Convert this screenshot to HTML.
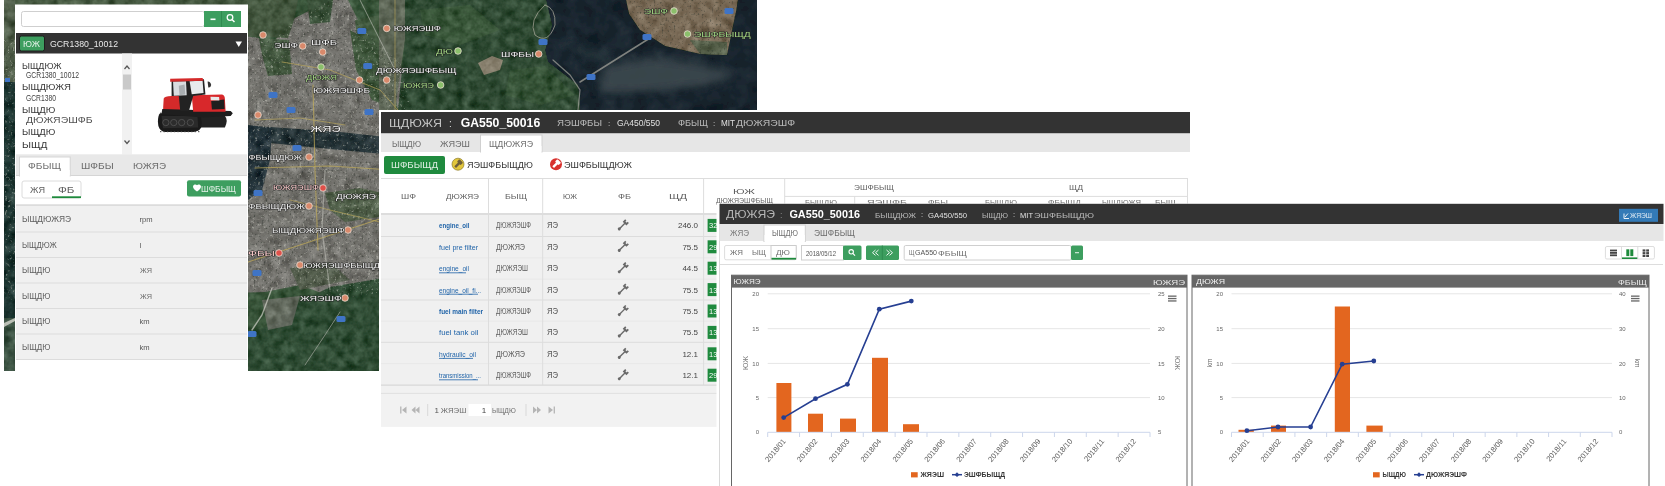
<!DOCTYPE html><html><head><meta charset="utf-8"><style>html,body{margin:0;padding:0;background:#fff;width:1665px;height:486px;overflow:hidden}svg{display:block;will-change:transform}</style></head><body>
<svg width="1665" height="486" viewBox="0 0 1665 486">
<rect x="0" y="0" width="1665" height="486" fill="#ffffff" />
<defs><filter id="tex" x="0" y="0" width="100%" height="100%" color-interpolation-filters="sRGB"><feTurbulence type="fractalNoise" baseFrequency="0.11" numOctaves="3" seed="7" result="n"/><feColorMatrix in="n" type="matrix" values="0.33 0.33 0.33 0 0  0.33 0.33 0.33 0 0  0.33 0.33 0.33 0 0  0 0 0 0 1" result="g"/><feComposite in="SourceGraphic" in2="g" operator="arithmetic" k1="0" k2="1" k3="0.55" k4="-0.275" result="b"/><feComposite in="b" in2="SourceGraphic" operator="in"/></filter><filter id="tex2" x="0" y="0" width="100%" height="100%" color-interpolation-filters="sRGB"><feTurbulence type="fractalNoise" baseFrequency="0.45" numOctaves="2" seed="11" result="n"/><feColorMatrix in="n" type="matrix" values="0.33 0.33 0.33 0 0  0.33 0.33 0.33 0 0  0.33 0.33 0.33 0 0  0 0 0 0 1" result="g"/><feComposite in="SourceGraphic" in2="g" operator="arithmetic" k1="0" k2="1" k3="0.7" k4="-0.35" result="b"/><feComposite in="b" in2="SourceGraphic" operator="in"/></filter><filter id="speck" x="0" y="0" width="100%" height="100%" color-interpolation-filters="sRGB"><feTurbulence type="fractalNoise" baseFrequency="0.38" numOctaves="2" seed="4"/><feColorMatrix type="matrix" values="0 0 0 0 0.82  0 0 0 0 0.82  0 0 0 0 0.78  5 0 0 0 -3.0"/></filter><filter id="speckd" x="0" y="0" width="100%" height="100%" color-interpolation-filters="sRGB"><feTurbulence type="fractalNoise" baseFrequency="0.5" numOctaves="1" seed="9"/><feColorMatrix type="matrix" values="0 0 0 0 0.15  0 0 0 0 0.18  0 0 0 0 0.15  5 0 0 0 -3.0"/></filter><filter id="texw" x="0" y="0" width="100%" height="100%" color-interpolation-filters="sRGB"><feTurbulence type="fractalNoise" baseFrequency="0.06" numOctaves="3" seed="2" result="n"/><feColorMatrix in="n" type="matrix" values="0.33 0.33 0.33 0 0  0.33 0.33 0.33 0 0  0.33 0.33 0.33 0 0  0 0 0 0 1" result="g"/><feComposite in="SourceGraphic" in2="g" operator="arithmetic" k1="0" k2="1" k3="0.22" k4="-0.11" result="b"/><feComposite in="b" in2="SourceGraphic" operator="in"/></filter><filter id="mblur" x="0" y="0" width="100%" height="100%"><feGaussianBlur stdDeviation="0.6"/></filter><filter id="soft" x="-20%" y="-20%" width="140%" height="140%"><feGaussianBlur stdDeviation="4"/></filter><clipPath id="urbclip"><path d="M4 40 L200 30 L275 40 L295 18 L330 0 L348 0 L362 28 L380 45 L400 62 L412 110 L395 160 L392 290 L340 300 L300 285 L265 292 L4 300 Z"/></clipPath><clipPath id="islclip"><path d="M626 0 L738 0 L736 12 L727 55 L700 54 L665 46 L640 30 L629 14 Z"/></clipPath><clipPath id="mapclip"><rect x="4" y="0" width="753" height="371"/></clipPath></defs>
<g filter="url(#mblur)">
<g clip-path="url(#mapclip)"><g filter="url(#tex)">
<rect x="4" y="0" width="753" height="371" fill="#385439" />
<path d="M4 40 L200 30 L275 40 L295 18 L330 0 L348 0 L362 28 L380 45 L400 62 L412 110 L395 160 L392 290 L340 300 L300 285 L265 292 L4 300 Z" fill="#74736e"/>
<path d="M4 0 L298 0 L294 20 L288 38 L240 36 L4 40 Z" fill="#44573f"/>
<path d="M350 30 L385 50 L398 110 L372 100 L356 70 Z" fill="#40583d"/>
<path d="M325 193 L360 188 L392 195 L392 215 L345 222 L330 210 Z" fill="#4f5e48"/>
<path d="M259 38 L289 40 L292 74 L268 76 L262 55 Z" fill="#43583f"/>
<path d="M307 0 L333 0 L330 22 L310 24 Z" fill="#3b523a"/>
<path d="M355 20 L380 15 L395 60 L380 90 L362 80 Z" fill="#3f573c"/>
<path d="M290 268 L330 262 L350 280 L300 290 Z" fill="#56604f"/>
<path d="M248 126 L270 127 L340 132 L395 138 L395 155 L340 150 L300 146 L270 143 Z" fill="#263438"/>
<path d="M248 125 L272 128 L270 160 L262 190 L248 200 Z" fill="#24333a"/>
<path d="M248 332 L270 326 L300 302 L330 287 L395 276 L395 371 L248 371 Z" fill="#304d35"/>
<path d="M262 300 L300 296 L292 325 L268 330 Z" fill="#6d6e66" opacity="0.8"/>
<path d="M4 0 L15 0 L15 82 L4 82 Z" fill="#52604c"/>
<path d="M4 82 L15 82 L15 318 L4 318 Z" fill="#1e3632"/>
<path d="M4 318 L15 318 L15 371 L4 371 Z" fill="#3b5242"/>
<path d="M379 0 L410 0 L405 40 L395 110 L379 110 Z" fill="#5d6656"/>
<path d="M405 0 L546 0 L552 25 L545 50 L548 62 L578 85 L580 110 L398 110 L405 40 Z" fill="#304b34"/>
<path d="M420 10 L470 5 L500 30 L460 45 L425 35 Z" fill="#3d5a3c" opacity="0.8"/>
<path d="M510 70 L545 66 L575 95 L540 105 L505 95 Z" fill="#3a563a" opacity="0.8"/>
<path d="M478 63 L492 56 L503 60 L500 70 L484 75 Z" fill="#8a8270"/>
</g></g>
<g clip-path="url(#mapclip)"><g filter="url(#texw)">
<path d="M546 0 L626 0 L629 14 L640 30 L665 46 L700 54 L727 55 L736 12 L738 0 L757 0 L757 110 L580 110 L578 85 L548 62 L545 50 L552 25 Z" fill="#19252e"/>
</g>
<path d="M605 66 L650 58 L700 64 L735 74 L705 86 L640 92 L598 92 Z" fill="#3c4a50" filter="url(#soft)" opacity="0.9"/>
<path d="M560 40 L600 50 L620 60 L590 62 Z" fill="#2c3a40" filter="url(#soft)" opacity="0.6"/>
</g>
<g clip-path="url(#mapclip)"><g filter="url(#tex)">
<path d="M626 0 L738 0 L736 12 L727 55 L700 54 L665 46 L640 30 L629 14 Z" fill="#7a6b57"/>
<path d="M690 40 L727 42 L727 55 L700 54 Z" fill="#56604a"/>
</g></g>
<g clip-path="url(#mapclip)"><g clip-path="url(#urbclip)"><rect x="4" y="0" width="420" height="310" filter="url(#speck)" opacity="0.45"/><rect x="4" y="0" width="420" height="310" filter="url(#speckd)" opacity="0.5"/></g></g>
<g clip-path="url(#islclip)"><rect x="620" y="0" width="125" height="60" filter="url(#speckd)" opacity="0.45"/></g>
<path d="M4 323 L15 318 L15 321 L4 327 Z" fill="#d8d8d0" opacity="0.8"/>
<rect x="5" y="78" width="5" height="4" fill="#3f74c6" />
<g clip-path="url(#mapclip)" fill="none" stroke-linecap="round">
<path d="M580 82 L615 60 L650 38" stroke="#9a9a92" stroke-width="1.5" opacity="0.8"/>
<path d="M553 60 L570 75 L580 90 L578 110" stroke="#a5a59c" stroke-width="1.2" opacity="0.7"/>
<path d="M545 5 Q528 20 535 35 Q548 45 555 25 Q556 8 545 5" stroke="#b0aea0" stroke-width="1" opacity="0.7"/>
<path d="M282 62 L330 70 L380 90 L398 110" stroke="#b8a45a" stroke-width="1" opacity="0.7"/>
<path d="M313 85 L315 170 L318 250" stroke="#c2ac5a" stroke-width="1.1" opacity="0.7"/>
<path d="M255 168 L330 166 L392 170" stroke="#c2ac5a" stroke-width="1.1" opacity="0.7"/>
<path d="M255 120 L300 118 L345 125" stroke="#c2ac5a" stroke-width="1" opacity="0.6"/>
<path d="M360 0 L380 40 L395 70" stroke="#c7c7c0" stroke-width="1" opacity="0.6"/>
<path d="M395 0 L395 110" stroke="#b8a45a" stroke-width="1" opacity="0.6"/>
<path d="M272 288 L262 315 L252 330" stroke="#d0d0c8" stroke-width="1.4" opacity="0.7"/>
<path d="M340 312 L325 335 L305 365" stroke="#b8b8b0" stroke-width="1" opacity="0.6"/>
<path d="M248 262 L300 245 L340 232 L392 215" stroke="#c2ac5a" stroke-width="1.1" opacity="0.7"/>
<path d="M290 200 L330 210 L392 225" stroke="#c2ac5a" stroke-width="1" opacity="0.6"/>
<path d="M325 170 L322 230 L330 290" stroke="#c9c9c2" stroke-width="1.2" opacity="0.5"/>
</g>
</g>
<circle cx="386.7" cy="28.4" r="3.3" fill="#d9896b" stroke="#e8ddd2" stroke-width="0.8"/>
<circle cx="302.7" cy="46" r="3.3" fill="#d9896b" stroke="#e8ddd2" stroke-width="0.8"/>
<circle cx="322.7" cy="52" r="3.3" fill="#d9896b" stroke="#e8ddd2" stroke-width="0.8"/>
<circle cx="458" cy="51" r="3.3" fill="#8bbf6b" stroke="#e8ddd2" stroke-width="0.8"/>
<circle cx="386.7" cy="80" r="3.3" fill="#d9896b" stroke="#e8ddd2" stroke-width="0.8"/>
<circle cx="440.6" cy="85" r="3.3" fill="#8bbf6b" stroke="#e8ddd2" stroke-width="0.8"/>
<circle cx="321" cy="67" r="3.3" fill="#8bbf6b" stroke="#e8ddd2" stroke-width="0.8"/>
<circle cx="359.5" cy="80" r="3.3" fill="#d9896b" stroke="#e8ddd2" stroke-width="0.8"/>
<circle cx="538.7" cy="54" r="3.3" fill="#d9896b" stroke="#e8ddd2" stroke-width="0.8"/>
<circle cx="674" cy="11" r="3.3" fill="#8bbf6b" stroke="#e8ddd2" stroke-width="0.8"/>
<circle cx="687.5" cy="34" r="3.3" fill="#8bbf6b" stroke="#e8ddd2" stroke-width="0.8"/>
<circle cx="309" cy="157" r="3.3" fill="#d9896b" stroke="#e8ddd2" stroke-width="0.8"/>
<circle cx="323" cy="188" r="3.3" fill="#e0504a" stroke="#e8ddd2" stroke-width="0.8"/>
<circle cx="309" cy="206" r="3.3" fill="#d9896b" stroke="#e8ddd2" stroke-width="0.8"/>
<circle cx="348" cy="230" r="3.3" fill="#d9896b" stroke="#e8ddd2" stroke-width="0.8"/>
<circle cx="279" cy="253" r="3.3" fill="#e0504a" stroke="#e8ddd2" stroke-width="0.8"/>
<circle cx="300" cy="265" r="3.3" fill="#d9896b" stroke="#e8ddd2" stroke-width="0.8"/>
<circle cx="345" cy="298" r="3.3" fill="#d9896b" stroke="#e8ddd2" stroke-width="0.8"/>
<circle cx="263" cy="35" r="3.3" fill="#d9896b" stroke="#e8ddd2" stroke-width="0.8"/>
<circle cx="258" cy="115" r="3.3" fill="#d9896b" stroke="#e8ddd2" stroke-width="0.8"/>
<rect x="363.2" y="63" width="9" height="6" fill="#3f74c6" rx="1.5" />
<rect x="286.5" y="107" width="9" height="6" fill="#3f74c6" rx="1.5" />
<rect x="357.3" y="28" width="9" height="6" fill="#3f74c6" rx="1.5" />
<rect x="268.5" y="92" width="9" height="6" fill="#3f74c6" rx="1.5" />
<rect x="364.5" y="109" width="9" height="6" fill="#3f74c6" rx="1.5" />
<rect x="724.5" y="8" width="9" height="6" fill="#3f74c6" rx="1.5" />
<rect x="642.5" y="34" width="9" height="6" fill="#3f74c6" rx="1.5" />
<rect x="586.5" y="74" width="9" height="6" fill="#3f74c6" rx="1.5" />
<rect x="538.5" y="39" width="9" height="6" fill="#3f74c6" rx="1.5" />
<rect x="252.5" y="270" width="9" height="6" fill="#3f74c6" rx="1.5" />
<rect x="247.5" y="331" width="9" height="6" fill="#3f74c6" rx="1.5" />
<rect x="336.5" y="316" width="9" height="6" fill="#3f74c6" rx="1.5" />
<rect x="253.5" y="190" width="9" height="6" fill="#3f74c6" rx="1.5" />
<rect x="292.5" y="145" width="9" height="6" fill="#3f74c6" rx="1.5" />
<g stroke="#262626" stroke-width="1.1" stroke-opacity="0.85" paint-order="stroke" stroke-linejoin="round">
<text x="393.8" y="30.5" font-size="6.93" fill="#f0f0f0" font-weight="normal" text-anchor="start" font-family="Liberation Sans" textLength="47.2" lengthAdjust="spacingAndGlyphs" >ЮЖЯЭШФ</text>
<text x="274.3" y="47.5" font-size="6.93" fill="#f0f0f0" font-weight="normal" text-anchor="start" font-family="Liberation Sans" textLength="23.7" lengthAdjust="spacingAndGlyphs" >ЭШФ</text>
<text x="311" y="44.5" font-size="6.93" fill="#f0f0f0" font-weight="normal" text-anchor="start" font-family="Liberation Sans" textLength="26" lengthAdjust="spacingAndGlyphs" >ШФБ</text>
<text x="436" y="53.5" font-size="6.93" fill="#9fd27f" font-weight="normal" text-anchor="start" font-family="Liberation Sans" textLength="17" lengthAdjust="spacingAndGlyphs" >ДЮ</text>
<text x="376" y="72.5" font-size="6.93" fill="#f0f0f0" font-weight="normal" text-anchor="start" font-family="Liberation Sans" textLength="80.5" lengthAdjust="spacingAndGlyphs" >ДЮЖЯЭШФБЫЩ</text>
<text x="403" y="87.5" font-size="6.93" fill="#9fd27f" font-weight="normal" text-anchor="start" font-family="Liberation Sans" textLength="31" lengthAdjust="spacingAndGlyphs" >ЮЖЯЭ</text>
<text x="306" y="79.5" font-size="6.93" fill="#9fd27f" font-weight="normal" text-anchor="start" font-family="Liberation Sans" textLength="31" lengthAdjust="spacingAndGlyphs" >ДЮЖЯ</text>
<text x="313" y="92.5" font-size="6.93" fill="#f0f0f0" font-weight="normal" text-anchor="start" font-family="Liberation Sans" textLength="57" lengthAdjust="spacingAndGlyphs" >ЮЖЯЭШФБ</text>
<text x="501" y="56.5" font-size="6.93" fill="#f0f0f0" font-weight="normal" text-anchor="start" font-family="Liberation Sans" textLength="33" lengthAdjust="spacingAndGlyphs" >ШФБЫ</text>
<text x="644" y="13.5" font-size="6.93" fill="#9fd27f" font-weight="normal" text-anchor="start" font-family="Liberation Sans" textLength="24" lengthAdjust="spacingAndGlyphs" >ЭШФ</text>
<text x="694" y="36.5" font-size="6.93" fill="#9fd27f" font-weight="normal" text-anchor="start" font-family="Liberation Sans" textLength="56.8" lengthAdjust="spacingAndGlyphs" >ЭШФБЫЩД</text>
<text x="248.6" y="160.1" font-size="6.93" fill="#f0f0f0" font-weight="normal" text-anchor="start" font-family="Liberation Sans" textLength="53.4" lengthAdjust="spacingAndGlyphs" >ФБЫЩДЮЖ</text>
<text x="273" y="190.3" font-size="6.93" fill="#f4c6c6" font-weight="normal" text-anchor="start" font-family="Liberation Sans" textLength="46" lengthAdjust="spacingAndGlyphs" >ЮЖЯЭШФ</text>
<text x="336" y="198.5" font-size="6.93" fill="#f0f0f0" font-weight="normal" text-anchor="start" font-family="Liberation Sans" textLength="40" lengthAdjust="spacingAndGlyphs" >ДЮЖЯЭ</text>
<text x="248" y="208.5" font-size="6.93" fill="#f0f0f0" font-weight="normal" text-anchor="start" font-family="Liberation Sans" textLength="57" lengthAdjust="spacingAndGlyphs" >ФБЫЩДЮЖ</text>
<text x="272" y="232.5" font-size="6.93" fill="#f0f0f0" font-weight="normal" text-anchor="start" font-family="Liberation Sans" textLength="73" lengthAdjust="spacingAndGlyphs" >ЫЩДЮЖЯЭШФ</text>
<text x="248" y="255.5" font-size="6.93" fill="#f4c6c6" font-weight="normal" text-anchor="start" font-family="Liberation Sans" textLength="27" lengthAdjust="spacingAndGlyphs" >ФБЫ</text>
<text x="303" y="267.5" font-size="6.93" fill="#f0f0f0" font-weight="normal" text-anchor="start" font-family="Liberation Sans" textLength="77" lengthAdjust="spacingAndGlyphs" >ЮЖЯЭШФБЫЩД</text>
<text x="300" y="300.5" font-size="6.93" fill="#f0f0f0" font-weight="normal" text-anchor="start" font-family="Liberation Sans" textLength="42" lengthAdjust="spacingAndGlyphs" >ЖЯЭШФ</text>
<text x="310.5" y="132.4" font-size="9.97" fill="#f4f4f4" font-weight="normal" text-anchor="start" font-family="Liberation Sans" textLength="30.3" lengthAdjust="spacingAndGlyphs" >ЖЯЭ</text>
</g>
<rect x="15" y="4.5" width="233" height="367" fill="#ffffff" />
<rect x="21.5" y="11.5" width="183" height="15" fill="#ffffff" stroke="#cfcfcf" stroke-width="1" rx="2" />
<rect x="204" y="11" width="37" height="16" fill="#3d9e5f" />
<line x1="221.5" y1="11" x2="221.5" y2="27" stroke="#2f8a4f" stroke-width="1" />
<rect x="210.5" y="18.5" width="5" height="1.6" fill="#ffffff" />
<circle cx="230" cy="17.5" r="2.8" fill="none" stroke="#fff" stroke-width="1.3"/>
<line x1="232" y1="19.5" x2="234.5" y2="22" stroke="#fff" stroke-width="1.5" />
<rect x="16" y="33" width="231" height="20.5" fill="#333333" />
<rect x="19.5" y="36" width="25" height="15" fill="#3d9e5f" stroke="#1e1e1e" stroke-width="1" rx="2" />
<text x="23" y="46.5" font-size="8.4" fill="#ffffff" font-weight="normal" text-anchor="start" font-family="Liberation Sans" textLength="17" lengthAdjust="spacingAndGlyphs" opacity="0.85">ЮЖ</text>
<text x="50" y="46.6" font-size="9.8" fill="#e8e8e8" font-weight="normal" text-anchor="start" font-family="Liberation Sans" textLength="68" lengthAdjust="spacingAndGlyphs" >GCR1380_10012</text>
<path d="M235.5 41.5 L242 41.5 L238.75 47 Z" fill="#fff"/>
<text x="22" y="68.7" font-size="9.24" fill="#1a1a1a" font-weight="normal" text-anchor="start" font-family="Liberation Sans" textLength="39.5" lengthAdjust="spacingAndGlyphs" opacity="0.9">ЫЩДЮЖ</text>
<text x="26" y="77.8" font-size="8.6" fill="#444" font-weight="normal" text-anchor="start" font-family="Liberation Sans" textLength="53" lengthAdjust="spacingAndGlyphs" >GCR1380_10012</text>
<text x="22" y="90.0" font-size="9.24" fill="#1a1a1a" font-weight="normal" text-anchor="start" font-family="Liberation Sans" textLength="49" lengthAdjust="spacingAndGlyphs" opacity="0.9">ЫЩДЮЖЯ</text>
<text x="26" y="100.8" font-size="8.6" fill="#444" font-weight="normal" text-anchor="start" font-family="Liberation Sans" textLength="30" lengthAdjust="spacingAndGlyphs" >GCR1380</text>
<text x="22" y="113.1" font-size="9.24" fill="#1a1a1a" font-weight="normal" text-anchor="start" font-family="Liberation Sans" textLength="33.3" lengthAdjust="spacingAndGlyphs" opacity="0.9">ЫЩДЮ</text>
<text x="26" y="122.6" font-size="8.72" fill="#333" font-weight="normal" text-anchor="start" font-family="Liberation Sans" textLength="66.6" lengthAdjust="spacingAndGlyphs" opacity="0.85">ДЮЖЯЭШФБ</text>
<text x="22" y="135.0" font-size="9.24" fill="#1a1a1a" font-weight="normal" text-anchor="start" font-family="Liberation Sans" textLength="33.3" lengthAdjust="spacingAndGlyphs" opacity="0.9">ЫЩДЮ</text>
<text x="22" y="147.8" font-size="9.24" fill="#1a1a1a" font-weight="normal" text-anchor="start" font-family="Liberation Sans" textLength="25.4" lengthAdjust="spacingAndGlyphs" opacity="0.9">ЫЩД</text>
<rect x="122" y="53.5" width="10" height="101" fill="#f1f1f1" />
<rect x="123" y="74.5" width="8" height="15" fill="#c9c9c9" />
<path d="M124.5 69 L127 66 L129.5 69" fill="none" stroke="#555" stroke-width="1.2"/>
<path d="M124.5 140.5 L127 143.5 L129.5 140.5" fill="none" stroke="#555" stroke-width="1.2"/>
<g transform="translate(150,70) scale(0.144)">
<path d="M330 320 L520 320 Q545 345 520 400 L340 400 Z" fill="#222"/>
<path d="M70 300 L330 300 Q370 330 355 400 Q340 430 300 430 L100 430 Q55 420 55 360 Q55 315 70 300 Z" fill="#1a1a1a"/>
<path d="M80 320 L330 320 L335 400 L90 405 Z" fill="#3a3a3a" opacity="0.5"/>
<circle cx="110" cy="365" r="22" fill="#2c2c2c" stroke="#5a5a5a" stroke-width="5"/>
<circle cx="165" cy="365" r="22" fill="#2c2c2c" stroke="#5a5a5a" stroke-width="5"/>
<circle cx="220" cy="365" r="22" fill="#2c2c2c" stroke="#5a5a5a" stroke-width="5"/>
<circle cx="280" cy="365" r="22" fill="#2c2c2c" stroke="#5a5a5a" stroke-width="5"/>
<rect x="70" y="296" width="9" height="10" fill="#444"/>
<rect x="70" y="424" width="9" height="8" fill="#444"/>
<rect x="94" y="296" width="9" height="10" fill="#444"/>
<rect x="94" y="424" width="9" height="8" fill="#444"/>
<rect x="118" y="296" width="9" height="10" fill="#444"/>
<rect x="118" y="424" width="9" height="8" fill="#444"/>
<rect x="142" y="296" width="9" height="10" fill="#444"/>
<rect x="142" y="424" width="9" height="8" fill="#444"/>
<rect x="166" y="296" width="9" height="10" fill="#444"/>
<rect x="166" y="424" width="9" height="8" fill="#444"/>
<rect x="190" y="296" width="9" height="10" fill="#444"/>
<rect x="190" y="424" width="9" height="8" fill="#444"/>
<rect x="214" y="296" width="9" height="10" fill="#444"/>
<rect x="214" y="424" width="9" height="8" fill="#444"/>
<rect x="238" y="296" width="9" height="10" fill="#444"/>
<rect x="238" y="424" width="9" height="8" fill="#444"/>
<rect x="262" y="296" width="9" height="10" fill="#444"/>
<rect x="262" y="424" width="9" height="8" fill="#444"/>
<rect x="286" y="296" width="9" height="10" fill="#444"/>
<rect x="286" y="424" width="9" height="8" fill="#444"/>
<rect x="310" y="296" width="9" height="10" fill="#444"/>
<rect x="310" y="424" width="9" height="8" fill="#444"/>
<rect x="334" y="296" width="9" height="10" fill="#444"/>
<rect x="334" y="424" width="9" height="8" fill="#444"/>
<path d="M95 200 Q100 180 150 180 L215 180 L225 290 L90 290 Z" fill="#d42a2a"/>
<path d="M85 270 L560 285 L575 300 L560 320 L360 330 L80 305 Z" fill="#1e1e1e"/>
<path d="M290 175 L500 170 Q520 175 520 200 L525 290 L300 290 Z" fill="#d8282b"/>
<path d="M425 215 L515 205 L518 270 L430 275 Z" fill="#1f1f1f"/>
<path d="M420 185 L480 188 L482 212 L422 210 Z" fill="#e8e8e8"/>
<path d="M150 70 L375 65 L385 170 L300 180 L270 285 L210 285 L200 180 L150 180 Z" fill="#222"/>
<path d="M160 80 L250 78 L255 175 L165 178 Z" fill="#d8dcdf"/>
<path d="M275 78 L365 75 L372 160 L290 168 Z" fill="#e8ebed"/>
<path d="M200 110 L240 100 L245 170 L205 175 Z" fill="#8a8f93" opacity="0.6"/>
<path d="M140 60 L365 55 L372 75 L140 82 Z" fill="#d42a2a"/>
<path d="M400 80 Q420 78 425 105 Q420 125 405 122 Z" fill="#333"/>
</g>
<rect x="16" y="154.3" width="231" height="21.2" fill="#e8e8e8" />
<rect x="19.5" y="157" width="50.7" height="19" fill="#ffffff" stroke="#d5d5d5" stroke-width="1" />
<rect x="20" y="170" width="49.7" height="7" fill="#ffffff" />
<text x="28" y="168.8" font-size="8.93" fill="#555" font-weight="normal" text-anchor="start" font-family="Liberation Sans" textLength="33" lengthAdjust="spacingAndGlyphs" opacity="0.85">ФБЫЩ</text>
<text x="81" y="168.8" font-size="8.93" fill="#555" font-weight="normal" text-anchor="start" font-family="Liberation Sans" textLength="32.7" lengthAdjust="spacingAndGlyphs" opacity="0.85">ШФБЫ</text>
<text x="133" y="168.8" font-size="8.93" fill="#555" font-weight="normal" text-anchor="start" font-family="Liberation Sans" textLength="33" lengthAdjust="spacingAndGlyphs" opacity="0.85">ЮЖЯЭ</text>
<line x1="16" y1="175.5" x2="19.5" y2="175.5" stroke="#d5d5d5" stroke-width="1" />
<line x1="70.2" y1="175.5" x2="247" y2="175.5" stroke="#d5d5d5" stroke-width="1" />
<rect x="22" y="181" width="59" height="17" fill="#ffffff" stroke="#dcdcdc" stroke-width="1" rx="2" />
<text x="30" y="192.7" font-size="8.93" fill="#444" font-weight="normal" text-anchor="start" font-family="Liberation Sans" textLength="15" lengthAdjust="spacingAndGlyphs" opacity="0.85">ЖЯ</text>
<text x="58" y="192.7" font-size="8.93" fill="#444" font-weight="normal" text-anchor="start" font-family="Liberation Sans" textLength="16.5" lengthAdjust="spacingAndGlyphs" opacity="0.85">ФБ</text>
<rect x="52" y="196.3" width="29" height="1.8" fill="#1e8a3c" />
<rect x="187" y="180.2" width="54" height="16.3" fill="#3d9e5f" rx="2" />
<path d="M193 186.5 a2.3 2.3 0 0 1 4 -1.3 a2.3 2.3 0 0 1 4 1.3 q0 2.5 -4 5 q-4 -2.5 -4 -5z" fill="#fff"/>
<text x="201" y="191.5" font-size="8.4" fill="#ffffff" font-weight="normal" text-anchor="start" font-family="Liberation Sans" textLength="35" lengthAdjust="spacingAndGlyphs" opacity="0.85">ШФБЫЩ</text>
<line x1="16" y1="204.8" x2="247" y2="204.8" stroke="#d9d9d9" stroke-width="1" />
<rect x="16" y="205.5" width="231" height="154" fill="#f0f0f0" />
<line x1="16" y1="205.5" x2="247" y2="205.5" stroke="#dcdcdc" stroke-width="1" />
<line x1="16" y1="232" x2="247" y2="232" stroke="#dcdcdc" stroke-width="1" />
<line x1="16" y1="257.5" x2="247" y2="257.5" stroke="#dcdcdc" stroke-width="1" />
<line x1="16" y1="283" x2="247" y2="283" stroke="#dcdcdc" stroke-width="1" />
<line x1="16" y1="308.5" x2="247" y2="308.5" stroke="#dcdcdc" stroke-width="1" />
<line x1="16" y1="334" x2="247" y2="334" stroke="#dcdcdc" stroke-width="1" />
<line x1="16" y1="359.5" x2="247" y2="359.5" stroke="#dcdcdc" stroke-width="1" />
<text x="22" y="221.9" font-size="8.72" fill="#444" font-weight="normal" text-anchor="start" font-family="Liberation Sans" textLength="49" lengthAdjust="spacingAndGlyphs" opacity="0.85">ЫЩДЮЖЯЭ</text>
<text x="139.5" y="221.55" font-size="7.6" fill="#555" font-weight="normal" text-anchor="start" font-family="Liberation Sans" >rpm</text>
<text x="22" y="247.9" font-size="8.72" fill="#444" font-weight="normal" text-anchor="start" font-family="Liberation Sans" textLength="34.8" lengthAdjust="spacingAndGlyphs" opacity="0.85">ЫЩДЮЖ</text>
<text x="139.5" y="247.55" font-size="7.6" fill="#555" font-weight="normal" text-anchor="start" font-family="Liberation Sans" >l</text>
<text x="22" y="273.4" font-size="8.72" fill="#444" font-weight="normal" text-anchor="start" font-family="Liberation Sans" textLength="28.3" lengthAdjust="spacingAndGlyphs" opacity="0.85">ЫЩДЮ</text>
<text x="140" y="273.2" font-size="6.83" fill="#555" font-weight="normal" text-anchor="start" font-family="Liberation Sans" textLength="12" lengthAdjust="spacingAndGlyphs" opacity="0.85">ЖЯ</text>
<text x="22" y="298.9" font-size="8.72" fill="#444" font-weight="normal" text-anchor="start" font-family="Liberation Sans" textLength="28.3" lengthAdjust="spacingAndGlyphs" opacity="0.85">ЫЩДЮ</text>
<text x="140" y="298.7" font-size="6.83" fill="#555" font-weight="normal" text-anchor="start" font-family="Liberation Sans" textLength="12" lengthAdjust="spacingAndGlyphs" opacity="0.85">ЖЯ</text>
<text x="22" y="324.4" font-size="8.72" fill="#444" font-weight="normal" text-anchor="start" font-family="Liberation Sans" textLength="28.3" lengthAdjust="spacingAndGlyphs" opacity="0.85">ЫЩДЮ</text>
<text x="139.5" y="324.05" font-size="7.6" fill="#555" font-weight="normal" text-anchor="start" font-family="Liberation Sans" >km</text>
<text x="22" y="349.9" font-size="8.72" fill="#444" font-weight="normal" text-anchor="start" font-family="Liberation Sans" textLength="28.3" lengthAdjust="spacingAndGlyphs" opacity="0.85">ЫЩДЮ</text>
<text x="139.5" y="349.55" font-size="7.6" fill="#555" font-weight="normal" text-anchor="start" font-family="Liberation Sans" >km</text>
<rect x="379" y="110" width="812" height="318" fill="#ffffff" />
<rect x="381" y="112" width="809" height="21.5" fill="#333333" />
<text x="389" y="126.8" font-size="11.13" fill="#dddddd" font-weight="normal" text-anchor="start" font-family="Liberation Sans" textLength="53" lengthAdjust="spacingAndGlyphs" opacity="0.85">ЩДЮЖЯ</text>
<text x="449" y="126.5" font-size="10" fill="#ddd" font-weight="normal" text-anchor="start" font-family="Liberation Sans" >:</text>
<text x="460.7" y="127.3" font-size="12.3" fill="#ffffff" font-weight="bold" text-anchor="start" font-family="Liberation Sans" textLength="79.5" lengthAdjust="spacingAndGlyphs" >GA550_50016</text>
<text x="557" y="126.3" font-size="8.61" fill="#d0d0d0" font-weight="normal" text-anchor="start" font-family="Liberation Sans" textLength="45" lengthAdjust="spacingAndGlyphs" opacity="0.85">ЯЭШФБЫ</text>
<text x="608" y="126" font-size="8" fill="#ddd" font-weight="normal" text-anchor="start" font-family="Liberation Sans" >:</text>
<text x="617" y="126.2" font-size="8.5" fill="#e0e0e0" font-weight="normal" text-anchor="start" font-family="Liberation Sans" textLength="43" lengthAdjust="spacingAndGlyphs" >GA450/550</text>
<text x="678" y="126.3" font-size="8.61" fill="#d0d0d0" font-weight="normal" text-anchor="start" font-family="Liberation Sans" textLength="30" lengthAdjust="spacingAndGlyphs" opacity="0.85">ФБЫЩ</text>
<text x="713" y="126" font-size="8" fill="#ddd" font-weight="normal" text-anchor="start" font-family="Liberation Sans" >:</text>
<text x="721" y="126.2" font-size="8.5" fill="#e0e0e0" font-weight="normal" text-anchor="start" font-family="Liberation Sans" textLength="14" lengthAdjust="spacingAndGlyphs" >MIT</text>
<text x="736" y="126.3" font-size="8.61" fill="#d0d0d0" font-weight="normal" text-anchor="start" font-family="Liberation Sans" textLength="59" lengthAdjust="spacingAndGlyphs" opacity="0.85">ДЮЖЯЭШФ</text>
<rect x="381" y="133.5" width="809" height="18.5" fill="#e6e6e6" />
<rect x="480.5" y="135" width="61.5" height="17" fill="#ffffff" stroke="#d0d0d0" stroke-width="1" />
<rect x="481" y="146" width="60.5" height="8" fill="#ffffff" />
<text x="392" y="146.6" font-size="8.61" fill="#555" font-weight="normal" text-anchor="start" font-family="Liberation Sans" textLength="29" lengthAdjust="spacingAndGlyphs" opacity="0.85">ЫЩДЮ</text>
<text x="440" y="146.6" font-size="8.61" fill="#555" font-weight="normal" text-anchor="start" font-family="Liberation Sans" textLength="30" lengthAdjust="spacingAndGlyphs" opacity="0.85">ЖЯЭШ</text>
<text x="489" y="146.6" font-size="8.61" fill="#555" font-weight="normal" text-anchor="start" font-family="Liberation Sans" textLength="44" lengthAdjust="spacingAndGlyphs" opacity="0.85">ЩДЮЖЯЭ</text>
<rect x="384" y="156" width="61" height="18" fill="#1f8a3e" rx="2" />
<text x="391" y="168.1" font-size="8.61" fill="#ffffff" font-weight="normal" text-anchor="start" font-family="Liberation Sans" textLength="47" lengthAdjust="spacingAndGlyphs" opacity="0.85">ШФБЫЩД</text>
<circle cx="458" cy="164.2" r="6" fill="#e2c63b" stroke="#8a7a2a" stroke-width="0.7"/>
<g transform="translate(458,164.2) rotate(-45)"><rect x="-4" y="-1.2" width="6" height="2.4" fill="#6e5f3a"/><rect x="1" y="-2.6" width="3.6" height="5.2" rx="1" fill="#6e5f3a"/></g>
<text x="467" y="168.1" font-size="8.61" fill="#222" font-weight="normal" text-anchor="start" font-family="Liberation Sans" textLength="66" lengthAdjust="spacingAndGlyphs" opacity="0.92">ЯЭШФБЫЩДЮ</text>
<circle cx="556" cy="164.2" r="6" fill="#d8312e"/>
<g transform="translate(556,164.2) rotate(-45)"><rect x="-4" y="-1.2" width="6" height="2.4" fill="#fff"/><rect x="1" y="-2.6" width="3.6" height="5.2" rx="1" fill="#fff"/></g>
<text x="564" y="168.1" font-size="8.61" fill="#222" font-weight="normal" text-anchor="start" font-family="Liberation Sans" textLength="68" lengthAdjust="spacingAndGlyphs" opacity="0.92">ЭШФБЫЩДЮЖ</text>
<line x1="381" y1="178.5" x2="1188" y2="178.5" stroke="#dddddd" stroke-width="1" />
<line x1="1187.5" y1="178.5" x2="1187.5" y2="214" stroke="#dddddd" stroke-width="1" />
<rect x="381" y="213" width="807" height="2" fill="#dddddd" />
<line x1="488.5" y1="178.5" x2="488.5" y2="214" stroke="#dddddd" stroke-width="1" />
<line x1="542.7" y1="178.5" x2="542.7" y2="214" stroke="#dddddd" stroke-width="1" />
<line x1="703.6" y1="178.5" x2="703.6" y2="214" stroke="#dddddd" stroke-width="1" />
<line x1="784.7" y1="178.5" x2="784.7" y2="214" stroke="#dddddd" stroke-width="1" />
<line x1="784.7" y1="196.4" x2="1187.5" y2="196.4" stroke="#dddddd" stroke-width="1" />
<line x1="854.7" y1="196.4" x2="854.7" y2="214" stroke="#dddddd" stroke-width="1" />
<text x="401" y="198.8" font-size="7.88" fill="#444" font-weight="normal" text-anchor="start" font-family="Liberation Sans" textLength="15" lengthAdjust="spacingAndGlyphs" opacity="0.85">ШФ</text>
<text x="446" y="198.8" font-size="7.88" fill="#444" font-weight="normal" text-anchor="start" font-family="Liberation Sans" textLength="33" lengthAdjust="spacingAndGlyphs" opacity="0.85">ДЮЖЯЭ</text>
<text x="505" y="198.8" font-size="7.88" fill="#444" font-weight="normal" text-anchor="start" font-family="Liberation Sans" textLength="22" lengthAdjust="spacingAndGlyphs" opacity="0.85">БЫЩ</text>
<text x="563" y="198.8" font-size="7.88" fill="#444" font-weight="normal" text-anchor="start" font-family="Liberation Sans" textLength="14" lengthAdjust="spacingAndGlyphs" opacity="0.85">ЮЖ</text>
<text x="618" y="198.8" font-size="7.88" fill="#444" font-weight="normal" text-anchor="start" font-family="Liberation Sans" textLength="13" lengthAdjust="spacingAndGlyphs" opacity="0.85">ФБ</text>
<text x="669" y="198.8" font-size="7.88" fill="#444" font-weight="normal" text-anchor="start" font-family="Liberation Sans" textLength="18" lengthAdjust="spacingAndGlyphs" opacity="0.85">ЩД</text>
<text x="733" y="193.8" font-size="7.88" fill="#444" font-weight="normal" text-anchor="start" font-family="Liberation Sans" textLength="22" lengthAdjust="spacingAndGlyphs" opacity="0.85">ЮЖ</text>
<text x="716" y="203.3" font-size="7.88" fill="#444" font-weight="normal" text-anchor="start" font-family="Liberation Sans" textLength="57" lengthAdjust="spacingAndGlyphs" opacity="0.85">ДЮЖЯЭШФБЫЩ</text>
<text x="854" y="189.8" font-size="7.88" fill="#444" font-weight="normal" text-anchor="start" font-family="Liberation Sans" textLength="40" lengthAdjust="spacingAndGlyphs" opacity="0.85">ЭШФБЫЩ</text>
<text x="1069" y="189.8" font-size="7.88" fill="#444" font-weight="normal" text-anchor="start" font-family="Liberation Sans" textLength="14" lengthAdjust="spacingAndGlyphs" opacity="0.85">ЩД</text>
<text x="805" y="204.6" font-size="7.35" fill="#555" font-weight="normal" text-anchor="start" font-family="Liberation Sans" textLength="32" lengthAdjust="spacingAndGlyphs" opacity="0.85">БЫЩДЮ</text>
<text x="867" y="204.6" font-size="7.35" fill="#555" font-weight="normal" text-anchor="start" font-family="Liberation Sans" textLength="40" lengthAdjust="spacingAndGlyphs" opacity="0.85">ЯЭШФБ</text>
<text x="928" y="204.6" font-size="7.35" fill="#555" font-weight="normal" text-anchor="start" font-family="Liberation Sans" textLength="20" lengthAdjust="spacingAndGlyphs" opacity="0.85">ФБЫ</text>
<text x="985" y="204.6" font-size="7.35" fill="#555" font-weight="normal" text-anchor="start" font-family="Liberation Sans" textLength="32" lengthAdjust="spacingAndGlyphs" opacity="0.85">БЫЩДЮ</text>
<text x="1048" y="204.6" font-size="7.35" fill="#555" font-weight="normal" text-anchor="start" font-family="Liberation Sans" textLength="33" lengthAdjust="spacingAndGlyphs" opacity="0.85">ФБЫЩД</text>
<text x="1102" y="204.6" font-size="7.35" fill="#555" font-weight="normal" text-anchor="start" font-family="Liberation Sans" textLength="39" lengthAdjust="spacingAndGlyphs" opacity="0.85">ЫЩДЮЖЯ</text>
<text x="1155" y="204.6" font-size="7.35" fill="#555" font-weight="normal" text-anchor="start" font-family="Liberation Sans" textLength="21" lengthAdjust="spacingAndGlyphs" opacity="0.85">БЫЩ</text>
<rect x="381" y="215" width="807" height="170" fill="#f0f0f0" />
<line x1="381" y1="236.5" x2="717" y2="236.5" stroke="#dcdcdc" stroke-width="1" />
<line x1="381" y1="300" x2="717" y2="300" stroke="#dcdcdc" stroke-width="1" />
<line x1="381" y1="342.3" x2="717" y2="342.3" stroke="#dcdcdc" stroke-width="1" />
<line x1="381" y1="385.2" x2="717" y2="385.2" stroke="#dcdcdc" stroke-width="1" />
<line x1="381" y1="257.9" x2="717" y2="257.9" stroke="#e8e8e8" stroke-width="1" />
<line x1="381" y1="279.2" x2="717" y2="279.2" stroke="#e8e8e8" stroke-width="1" />
<line x1="381" y1="321.1" x2="717" y2="321.1" stroke="#e8e8e8" stroke-width="1" />
<line x1="381" y1="363.7" x2="717" y2="363.7" stroke="#e8e8e8" stroke-width="1" />
<line x1="488.5" y1="215" x2="488.5" y2="385" stroke="#dddddd" stroke-width="1" />
<line x1="542.7" y1="215" x2="542.7" y2="385" stroke="#dddddd" stroke-width="1" />
<line x1="703.6" y1="215" x2="703.6" y2="385" stroke="#dddddd" stroke-width="1" />
<text x="439" y="228.4" font-size="8" fill="#1f63a8" font-weight="bold" text-anchor="start" font-family="Liberation Sans" textLength="30.4" lengthAdjust="spacingAndGlyphs" >engine_oil</text>
<text x="496" y="228.3" font-size="8.19" fill="#444" font-weight="normal" text-anchor="start" font-family="Liberation Sans" textLength="35.0" lengthAdjust="spacingAndGlyphs" opacity="0.85">ДЮЖЯЭШФ</text>
<text x="547" y="228.3" font-size="8.19" fill="#333" font-weight="normal" text-anchor="start" font-family="Liberation Sans" textLength="11" lengthAdjust="spacingAndGlyphs" opacity="0.85">ЯЭ</text>
<g transform="translate(622.8,225.4) rotate(-45)"><rect x="-5" y="-0.7" width="8" height="1.4" fill="#6a6a6a"/><path d="M2.5 -2.6 L6 -2.6 L6 -0.9 L4.6 -0.9 L4.6 0.9 L6 0.9 L6 2.6 L2.5 2.6 Z" fill="#6a6a6a"/><circle cx="-5" cy="0" r="1.5" fill="#6a6a6a"/></g>
<text x="698" y="228.4" font-size="8" fill="#444" font-weight="normal" text-anchor="end" font-family="Liberation Sans" >246.0</text>
<rect x="707.6" y="218.9" width="10" height="13" fill="#1f8a3e" />
<text x="709" y="228.4" font-size="7.5" fill="#ffffff" font-weight="normal" text-anchor="start" font-family="Liberation Sans" >32</text>
<text x="439" y="249.8" font-size="8" fill="#1f63a8" font-weight="normal" text-anchor="start" font-family="Liberation Sans" textLength="39" lengthAdjust="spacingAndGlyphs" >fuel pre filter</text>
<text x="496" y="249.7" font-size="8.19" fill="#444" font-weight="normal" text-anchor="start" font-family="Liberation Sans" textLength="29.0" lengthAdjust="spacingAndGlyphs" opacity="0.85">ДЮЖЯЭ</text>
<text x="547" y="249.7" font-size="8.19" fill="#333" font-weight="normal" text-anchor="start" font-family="Liberation Sans" textLength="11" lengthAdjust="spacingAndGlyphs" opacity="0.85">ЯЭ</text>
<g transform="translate(622.8,246.8) rotate(-45)"><rect x="-5" y="-0.7" width="8" height="1.4" fill="#6a6a6a"/><path d="M2.5 -2.6 L6 -2.6 L6 -0.9 L4.6 -0.9 L4.6 0.9 L6 0.9 L6 2.6 L2.5 2.6 Z" fill="#6a6a6a"/><circle cx="-5" cy="0" r="1.5" fill="#6a6a6a"/></g>
<text x="698" y="249.8" font-size="8" fill="#444" font-weight="normal" text-anchor="end" font-family="Liberation Sans" >75.5</text>
<rect x="707.6" y="240.3" width="10" height="13" fill="#1f8a3e" />
<text x="709" y="249.8" font-size="7.5" fill="#ffffff" font-weight="normal" text-anchor="start" font-family="Liberation Sans" >29</text>
<text x="439" y="271.2" font-size="8" fill="#1f63a8" font-weight="normal" text-anchor="start" font-family="Liberation Sans" textLength="30" lengthAdjust="spacingAndGlyphs" >engine_oil</text>
<line x1="439" y1="272.8" x2="466" y2="272.8" stroke="#1f63a8" stroke-width="0.8" />
<text x="496" y="271.1" font-size="8.19" fill="#444" font-weight="normal" text-anchor="start" font-family="Liberation Sans" textLength="32.0" lengthAdjust="spacingAndGlyphs" opacity="0.85">ДЮЖЯЭШ</text>
<text x="547" y="271.1" font-size="8.19" fill="#333" font-weight="normal" text-anchor="start" font-family="Liberation Sans" textLength="11" lengthAdjust="spacingAndGlyphs" opacity="0.85">ЯЭ</text>
<g transform="translate(622.8,268.2) rotate(-45)"><rect x="-5" y="-0.7" width="8" height="1.4" fill="#6a6a6a"/><path d="M2.5 -2.6 L6 -2.6 L6 -0.9 L4.6 -0.9 L4.6 0.9 L6 0.9 L6 2.6 L2.5 2.6 Z" fill="#6a6a6a"/><circle cx="-5" cy="0" r="1.5" fill="#6a6a6a"/></g>
<text x="698" y="271.2" font-size="8" fill="#444" font-weight="normal" text-anchor="end" font-family="Liberation Sans" >44.5</text>
<rect x="707.6" y="261.7" width="10" height="13" fill="#1f8a3e" />
<text x="709" y="271.2" font-size="7.5" fill="#ffffff" font-weight="normal" text-anchor="start" font-family="Liberation Sans" >13</text>
<text x="439" y="292.6" font-size="8" fill="#1f63a8" font-weight="normal" text-anchor="start" font-family="Liberation Sans" textLength="42" lengthAdjust="spacingAndGlyphs" >engine_oil_fi...</text>
<line x1="439" y1="294.20000000000005" x2="478" y2="294.20000000000005" stroke="#1f63a8" stroke-width="0.8" />
<text x="496" y="292.5" font-size="8.19" fill="#444" font-weight="normal" text-anchor="start" font-family="Liberation Sans" textLength="35.0" lengthAdjust="spacingAndGlyphs" opacity="0.85">ДЮЖЯЭШФ</text>
<text x="547" y="292.5" font-size="8.19" fill="#333" font-weight="normal" text-anchor="start" font-family="Liberation Sans" textLength="11" lengthAdjust="spacingAndGlyphs" opacity="0.85">ЯЭ</text>
<g transform="translate(622.8,289.6) rotate(-45)"><rect x="-5" y="-0.7" width="8" height="1.4" fill="#6a6a6a"/><path d="M2.5 -2.6 L6 -2.6 L6 -0.9 L4.6 -0.9 L4.6 0.9 L6 0.9 L6 2.6 L2.5 2.6 Z" fill="#6a6a6a"/><circle cx="-5" cy="0" r="1.5" fill="#6a6a6a"/></g>
<text x="698" y="292.6" font-size="8" fill="#444" font-weight="normal" text-anchor="end" font-family="Liberation Sans" >75.5</text>
<rect x="707.6" y="283.1" width="10" height="13" fill="#1f8a3e" />
<text x="709" y="292.6" font-size="7.5" fill="#ffffff" font-weight="normal" text-anchor="start" font-family="Liberation Sans" >13</text>
<text x="439" y="314.0" font-size="8" fill="#1f63a8" font-weight="bold" text-anchor="start" font-family="Liberation Sans" textLength="44" lengthAdjust="spacingAndGlyphs" >fuel main filter</text>
<text x="496" y="313.9" font-size="8.19" fill="#444" font-weight="normal" text-anchor="start" font-family="Liberation Sans" textLength="35.0" lengthAdjust="spacingAndGlyphs" opacity="0.85">ДЮЖЯЭШФ</text>
<text x="547" y="313.9" font-size="8.19" fill="#333" font-weight="normal" text-anchor="start" font-family="Liberation Sans" textLength="11" lengthAdjust="spacingAndGlyphs" opacity="0.85">ЯЭ</text>
<g transform="translate(622.8,311.0) rotate(-45)"><rect x="-5" y="-0.7" width="8" height="1.4" fill="#6a6a6a"/><path d="M2.5 -2.6 L6 -2.6 L6 -0.9 L4.6 -0.9 L4.6 0.9 L6 0.9 L6 2.6 L2.5 2.6 Z" fill="#6a6a6a"/><circle cx="-5" cy="0" r="1.5" fill="#6a6a6a"/></g>
<text x="698" y="314.0" font-size="8" fill="#444" font-weight="normal" text-anchor="end" font-family="Liberation Sans" >75.5</text>
<rect x="707.6" y="304.5" width="10" height="13" fill="#1f8a3e" />
<text x="709" y="314.0" font-size="7.5" fill="#ffffff" font-weight="normal" text-anchor="start" font-family="Liberation Sans" >13</text>
<text x="439" y="335.4" font-size="8" fill="#1f63a8" font-weight="normal" text-anchor="start" font-family="Liberation Sans" textLength="39.4" lengthAdjust="spacingAndGlyphs" >fuel tank oil</text>
<text x="496" y="335.3" font-size="8.19" fill="#444" font-weight="normal" text-anchor="start" font-family="Liberation Sans" textLength="32.0" lengthAdjust="spacingAndGlyphs" opacity="0.85">ДЮЖЯЭШ</text>
<text x="547" y="335.3" font-size="8.19" fill="#333" font-weight="normal" text-anchor="start" font-family="Liberation Sans" textLength="11" lengthAdjust="spacingAndGlyphs" opacity="0.85">ЯЭ</text>
<g transform="translate(622.8,332.4) rotate(-45)"><rect x="-5" y="-0.7" width="8" height="1.4" fill="#6a6a6a"/><path d="M2.5 -2.6 L6 -2.6 L6 -0.9 L4.6 -0.9 L4.6 0.9 L6 0.9 L6 2.6 L2.5 2.6 Z" fill="#6a6a6a"/><circle cx="-5" cy="0" r="1.5" fill="#6a6a6a"/></g>
<text x="698" y="335.4" font-size="8" fill="#444" font-weight="normal" text-anchor="end" font-family="Liberation Sans" >75.5</text>
<rect x="707.6" y="325.9" width="10" height="13" fill="#1f8a3e" />
<text x="709" y="335.4" font-size="7.5" fill="#ffffff" font-weight="normal" text-anchor="start" font-family="Liberation Sans" >13</text>
<text x="439" y="356.79999999999995" font-size="8" fill="#1f63a8" font-weight="normal" text-anchor="start" font-family="Liberation Sans" textLength="37" lengthAdjust="spacingAndGlyphs" >hydraulic_oil</text>
<line x1="439" y1="358.4" x2="473" y2="358.4" stroke="#1f63a8" stroke-width="0.8" />
<text x="496" y="356.7" font-size="8.19" fill="#444" font-weight="normal" text-anchor="start" font-family="Liberation Sans" textLength="29.0" lengthAdjust="spacingAndGlyphs" opacity="0.85">ДЮЖЯЭ</text>
<text x="547" y="356.7" font-size="8.19" fill="#333" font-weight="normal" text-anchor="start" font-family="Liberation Sans" textLength="11" lengthAdjust="spacingAndGlyphs" opacity="0.85">ЯЭ</text>
<g transform="translate(622.8,353.79999999999995) rotate(-45)"><rect x="-5" y="-0.7" width="8" height="1.4" fill="#6a6a6a"/><path d="M2.5 -2.6 L6 -2.6 L6 -0.9 L4.6 -0.9 L4.6 0.9 L6 0.9 L6 2.6 L2.5 2.6 Z" fill="#6a6a6a"/><circle cx="-5" cy="0" r="1.5" fill="#6a6a6a"/></g>
<text x="698" y="356.79999999999995" font-size="8" fill="#444" font-weight="normal" text-anchor="end" font-family="Liberation Sans" >12.1</text>
<rect x="707.6" y="347.29999999999995" width="10" height="13" fill="#1f8a3e" />
<text x="709" y="356.79999999999995" font-size="7.5" fill="#ffffff" font-weight="normal" text-anchor="start" font-family="Liberation Sans" >13</text>
<text x="439" y="378.2" font-size="8" fill="#1f63a8" font-weight="normal" text-anchor="start" font-family="Liberation Sans" textLength="42" lengthAdjust="spacingAndGlyphs" >transmission_...</text>
<line x1="439" y1="379.8" x2="478" y2="379.8" stroke="#1f63a8" stroke-width="0.8" />
<text x="496" y="378.1" font-size="8.19" fill="#444" font-weight="normal" text-anchor="start" font-family="Liberation Sans" textLength="35.0" lengthAdjust="spacingAndGlyphs" opacity="0.85">ДЮЖЯЭШФ</text>
<text x="547" y="378.1" font-size="8.19" fill="#333" font-weight="normal" text-anchor="start" font-family="Liberation Sans" textLength="11" lengthAdjust="spacingAndGlyphs" opacity="0.85">ЯЭ</text>
<g transform="translate(622.8,375.2) rotate(-45)"><rect x="-5" y="-0.7" width="8" height="1.4" fill="#6a6a6a"/><path d="M2.5 -2.6 L6 -2.6 L6 -0.9 L4.6 -0.9 L4.6 0.9 L6 0.9 L6 2.6 L2.5 2.6 Z" fill="#6a6a6a"/><circle cx="-5" cy="0" r="1.5" fill="#6a6a6a"/></g>
<text x="698" y="378.2" font-size="8" fill="#444" font-weight="normal" text-anchor="end" font-family="Liberation Sans" >12.1</text>
<rect x="707.6" y="368.7" width="10" height="13" fill="#1f8a3e" />
<text x="709" y="378.2" font-size="7.5" fill="#ffffff" font-weight="normal" text-anchor="start" font-family="Liberation Sans" >29</text>
<rect x="381" y="385.5" width="807" height="8" fill="#f1f1f1" />
<line x1="381" y1="385.2" x2="717" y2="385.2" stroke="#d8d8d8" stroke-width="1" />
<line x1="381" y1="393.4" x2="1188" y2="393.4" stroke="#dddddd" stroke-width="1" />
<rect x="381" y="393.9" width="807" height="33" fill="#f2f2f2" />
<path d="M400.8 406.5 L400.8 413.5" stroke="#b5b5b5" stroke-width="1.3"/><path d="M406.5 406.5 L402 410 L406.5 413.5 Z" fill="#b5b5b5"/>
<path d="M419.5 406.5 L415.5 410 L419.5 413.5 Z M415.5 406.5 L411.5 410 L415.5 413.5 Z" fill="#b5b5b5"/>
<line x1="427.7" y1="404" x2="427.7" y2="416" stroke="#d8d8d8" stroke-width="1" />
<text x="434.5" y="413" font-size="8" fill="#555" font-weight="normal" text-anchor="start" font-family="Liberation Sans" >1</text>
<text x="440.7" y="412.8" font-size="7.88" fill="#555" font-weight="normal" text-anchor="start" font-family="Liberation Sans" textLength="25.7" lengthAdjust="spacingAndGlyphs" opacity="0.85">ЖЯЭШ</text>
<rect x="468.5" y="404" width="22.5" height="12" fill="#ffffff" />
<text x="484" y="413" font-size="8" fill="#444" font-weight="normal" text-anchor="middle" font-family="Liberation Sans" >1</text>
<text x="492" y="412.8" font-size="7.88" fill="#555" font-weight="normal" text-anchor="start" font-family="Liberation Sans" textLength="23.8" lengthAdjust="spacingAndGlyphs" opacity="0.85">ЫЩДЮ</text>
<line x1="526" y1="404" x2="526" y2="416" stroke="#d8d8d8" stroke-width="1" />
<path d="M533 406.5 L537 410 L533 413.5 Z M537 406.5 L541 410 L537 413.5 Z" fill="#b5b5b5"/>
<path d="M548.5 406.5 L553 410 L548.5 413.5 Z" fill="#b5b5b5"/><path d="M554.3 406.5 L554.3 413.5" stroke="#b5b5b5" stroke-width="1.3"/>
<rect x="716.5" y="203.5" width="949" height="283" fill="#ffffff" />
<line x1="719.5" y1="224" x2="719.5" y2="486" stroke="#d8d8d8" stroke-width="1" />
<rect x="719.5" y="203.8" width="944" height="20.2" fill="#333333" />
<text x="726" y="217.9" font-size="10.29" fill="#cccccc" font-weight="normal" text-anchor="start" font-family="Liberation Sans" textLength="49" lengthAdjust="spacingAndGlyphs" opacity="0.85">ДЮЖЯЭ</text>
<text x="780" y="217.5" font-size="9" fill="#888" font-weight="normal" text-anchor="start" font-family="Liberation Sans" >:</text>
<text x="789.4" y="218.3" font-size="11" fill="#ffffff" font-weight="bold" text-anchor="start" font-family="Liberation Sans" textLength="70.6" lengthAdjust="spacingAndGlyphs" >GA550_50016</text>
<text x="875" y="217.6" font-size="7.88" fill="#d0d0d0" font-weight="normal" text-anchor="start" font-family="Liberation Sans" textLength="41" lengthAdjust="spacingAndGlyphs" opacity="0.85">БЫЩДЮЖ</text>
<text x="921" y="217.4" font-size="7.5" fill="#ddd" font-weight="normal" text-anchor="start" font-family="Liberation Sans" >:</text>
<text x="928" y="217.6" font-size="8" fill="#e0e0e0" font-weight="normal" text-anchor="start" font-family="Liberation Sans" textLength="39" lengthAdjust="spacingAndGlyphs" >GA450/550</text>
<text x="982" y="217.6" font-size="7.88" fill="#d0d0d0" font-weight="normal" text-anchor="start" font-family="Liberation Sans" textLength="26" lengthAdjust="spacingAndGlyphs" opacity="0.85">ЫЩДЮ</text>
<text x="1013" y="217.4" font-size="7.5" fill="#ddd" font-weight="normal" text-anchor="start" font-family="Liberation Sans" >:</text>
<text x="1020" y="217.6" font-size="8" fill="#e0e0e0" font-weight="normal" text-anchor="start" font-family="Liberation Sans" textLength="13" lengthAdjust="spacingAndGlyphs" >MIT</text>
<text x="1034" y="217.6" font-size="7.88" fill="#d0d0d0" font-weight="normal" text-anchor="start" font-family="Liberation Sans" textLength="60" lengthAdjust="spacingAndGlyphs" opacity="0.85">ЭШФБЫЩДЮ</text>
<rect x="1619" y="208.8" width="39" height="13" fill="#337ab7" />
<path d="M1624 218.5 L1629 218.5 M1624 218.5 L1624 213.5 M1625 217 L1628 213.5" stroke="#fff" stroke-width="0.9" fill="none"/>
<text x="1630" y="217.9" font-size="6.83" fill="#ffffff" font-weight="normal" text-anchor="start" font-family="Liberation Sans" textLength="22" lengthAdjust="spacingAndGlyphs" opacity="0.85">ЖЯЭШ</text>
<rect x="719.5" y="224" width="944" height="17" fill="#e6e6e6" />
<rect x="764" y="225" width="41.3" height="16.5" fill="#ffffff" stroke="#d0d0d0" stroke-width="1" />
<rect x="764.5" y="235" width="40.3" height="7" fill="#ffffff" />
<text x="730" y="235.7" font-size="8.19" fill="#666" font-weight="normal" text-anchor="start" font-family="Liberation Sans" textLength="19" lengthAdjust="spacingAndGlyphs" opacity="0.85">ЖЯЭ</text>
<text x="772" y="235.7" font-size="8.19" fill="#555" font-weight="normal" text-anchor="start" font-family="Liberation Sans" textLength="26" lengthAdjust="spacingAndGlyphs" opacity="0.85">ЫЩДЮ</text>
<text x="814" y="235.7" font-size="8.19" fill="#555" font-weight="normal" text-anchor="start" font-family="Liberation Sans" textLength="41" lengthAdjust="spacingAndGlyphs" opacity="0.85">ЭШФБЫЩ</text>
<rect x="724.6" y="245.5" width="71.6" height="14.3" fill="#ffffff" stroke="#dddddd" stroke-width="1" rx="1.5" />
<text x="730" y="255.3" font-size="7.88" fill="#555" font-weight="normal" text-anchor="start" font-family="Liberation Sans" textLength="13" lengthAdjust="spacingAndGlyphs" opacity="0.85">ЖЯ</text>
<text x="752" y="255.3" font-size="7.88" fill="#555" font-weight="normal" text-anchor="start" font-family="Liberation Sans" textLength="14" lengthAdjust="spacingAndGlyphs" opacity="0.85">ЫЩ</text>
<rect x="771" y="245.5" width="25.2" height="13.5" fill="#ffffff" stroke="#cccccc" stroke-width="1" />
<text x="776" y="255.3" font-size="7.88" fill="#555" font-weight="normal" text-anchor="start" font-family="Liberation Sans" textLength="14" lengthAdjust="spacingAndGlyphs" opacity="0.85">ДЮ</text>
<rect x="771.5" y="257.8" width="24.5" height="1.8" fill="#1e8a3c" />
<rect x="801.5" y="245.5" width="42" height="14.5" fill="#ffffff" stroke="#cfcfcf" stroke-width="1" />
<text x="806" y="255.5" font-size="7.8" fill="#555" font-weight="normal" text-anchor="start" font-family="Liberation Sans" textLength="30" lengthAdjust="spacingAndGlyphs" >2018/05/12</text>
<rect x="843" y="245.5" width="18.5" height="14.5" fill="#3d9e5f" rx="1.5" />
<circle cx="851.2" cy="251.8" r="2.2" fill="none" stroke="#fff" stroke-width="1.1"/>
<line x1="852.8" y1="253.4" x2="855" y2="255.6" stroke="#fff" stroke-width="1.2" />
<rect x="866" y="245.5" width="33" height="14.5" fill="#3d9e5f" rx="1.5" />
<line x1="882.3" y1="245.5" x2="882.3" y2="260" stroke="#2f8a4f" stroke-width="1" />
<path d="M875.5 250 L872.5 252.7 L875.5 255.4 M878.5 250 L875.5 252.7 L878.5 255.4" stroke="#fff" stroke-width="0.9" fill="none"/>
<path d="M886.5 250 L889.5 252.7 L886.5 255.4 M889.5 250 L892.5 252.7 L889.5 255.4" stroke="#fff" stroke-width="0.9" fill="none"/>
<rect x="904.2" y="245.5" width="167" height="14.5" fill="#ffffff" stroke="#cfcfcf" stroke-width="1" rx="1.5" />
<text x="909" y="255.3" font-size="7.35" fill="#555" font-weight="normal" text-anchor="start" font-family="Liberation Sans" textLength="5.5" lengthAdjust="spacingAndGlyphs" opacity="0.85">Щ</text>
<text x="915" y="255.4" font-size="7.5" fill="#555" font-weight="normal" text-anchor="start" font-family="Liberation Sans" textLength="22" lengthAdjust="spacingAndGlyphs" >GA550</text>
<text x="938" y="255.5" font-size="7.88" fill="#555" font-weight="normal" text-anchor="start" font-family="Liberation Sans" textLength="29" lengthAdjust="spacingAndGlyphs" opacity="0.85">ФБЫЩ</text>
<rect x="1071" y="245.5" width="12" height="14.5" fill="#3d9e5f" rx="1.5" />
<rect x="1075" y="252.3" width="4" height="0.9" fill="#fff" />
<rect x="1605.4" y="246.5" width="49" height="12.5" fill="#ffffff" stroke="#dddddd" stroke-width="1" rx="1.5" />
<rect x="1610" y="249.6" width="7" height="1.8" fill="#444" />
<rect x="1610" y="252" width="7" height="1.8" fill="#444" />
<rect x="1610" y="254.4" width="7" height="1.8" fill="#444" />
<line x1="1621.5" y1="246.5" x2="1621.5" y2="259" stroke="#dddddd" stroke-width="1" />
<rect x="1626.3" y="249.3" width="3" height="6.8" fill="#1e8a3c" />
<rect x="1630.3" y="249.3" width="3" height="6.8" fill="#1e8a3c" />
<rect x="1622" y="257.4" width="16" height="1.6" fill="#1e8a3c" />
<line x1="1637.8" y1="246.5" x2="1637.8" y2="259" stroke="#dddddd" stroke-width="1" />
<rect x="1642.6" y="249.4" width="2.8" height="2.2" fill="#444" />
<rect x="1642.6" y="252.1" width="2.8" height="2.2" fill="#444" />
<rect x="1642.6" y="254.8" width="2.8" height="2.2" fill="#444" />
<rect x="1646.2" y="249.4" width="2.8" height="2.2" fill="#444" />
<rect x="1646.2" y="252.1" width="2.8" height="2.2" fill="#444" />
<rect x="1646.2" y="254.8" width="2.8" height="2.2" fill="#444" />
<line x1="719.5" y1="264.5" x2="1663" y2="264.5" stroke="#dddddd" stroke-width="1" />
<rect x="731.5" y="275.2" width="455.5" height="220" fill="#ffffff" stroke="#666666" stroke-width="1" />
<rect x="731.5" y="275.2" width="455.5" height="12.4" fill="#666666" />
<text x="733.5" y="284.0" font-size="7.88" fill="#ffffff" font-weight="normal" text-anchor="start" font-family="Liberation Sans" textLength="27.0" lengthAdjust="spacingAndGlyphs" opacity="0.9">ЮЖЯЭ</text>
<text x="1153" y="284.8" font-size="7.88" fill="#ffffff" font-weight="normal" text-anchor="start" font-family="Liberation Sans" textLength="32" lengthAdjust="spacingAndGlyphs" opacity="0.85">ЮЖЯЭ</text>
<line x1="767.7" y1="293.8" x2="1150" y2="293.8" stroke="#e6e6e6" stroke-width="1" />
<line x1="767.7" y1="328.7" x2="1150" y2="328.7" stroke="#e6e6e6" stroke-width="1" />
<line x1="767.7" y1="363.4" x2="1150" y2="363.4" stroke="#e6e6e6" stroke-width="1" />
<line x1="767.7" y1="397.6" x2="1150" y2="397.6" stroke="#e6e6e6" stroke-width="1" />
<text x="759" y="296.0" font-size="6" fill="#666" font-weight="normal" text-anchor="end" font-family="Liberation Sans" >20</text>
<text x="1158" y="296.0" font-size="6" fill="#666" font-weight="normal" text-anchor="start" font-family="Liberation Sans" >25</text>
<text x="759" y="330.9" font-size="6" fill="#666" font-weight="normal" text-anchor="end" font-family="Liberation Sans" >15</text>
<text x="1158" y="330.9" font-size="6" fill="#666" font-weight="normal" text-anchor="start" font-family="Liberation Sans" >20</text>
<text x="759" y="365.59999999999997" font-size="6" fill="#666" font-weight="normal" text-anchor="end" font-family="Liberation Sans" >10</text>
<text x="1158" y="365.59999999999997" font-size="6" fill="#666" font-weight="normal" text-anchor="start" font-family="Liberation Sans" >15</text>
<text x="759" y="399.8" font-size="6" fill="#666" font-weight="normal" text-anchor="end" font-family="Liberation Sans" >5</text>
<text x="1158" y="399.8" font-size="6" fill="#666" font-weight="normal" text-anchor="start" font-family="Liberation Sans" >10</text>
<text x="759" y="434.2" font-size="6" fill="#666" font-weight="normal" text-anchor="end" font-family="Liberation Sans" >0</text>
<text x="1158" y="434.2" font-size="6" fill="#666" font-weight="normal" text-anchor="start" font-family="Liberation Sans" >5</text>
<rect x="1168" y="295.5" width="8.5" height="1.3" fill="#666" />
<rect x="1168" y="297.9" width="8.5" height="1.3" fill="#666" />
<rect x="1168" y="300.3" width="8.5" height="1.3" fill="#666" />
<g transform="translate(745,363) rotate(-90)">
<text x="-7" y="2.5" font-size="6.83" fill="#666" font-weight="normal" text-anchor="start" font-family="Liberation Sans" textLength="14" lengthAdjust="spacingAndGlyphs" opacity="0.85">ЮЖ</text>
</g>
<g transform="translate(1177,363) rotate(90)">
<text x="-7" y="2.5" font-size="6.83" fill="#666" font-weight="normal" text-anchor="start" font-family="Liberation Sans" textLength="14" lengthAdjust="spacingAndGlyphs" opacity="0.85">ЮЖ</text>
</g>
<rect x="776.4" y="383" width="15.0" height="49" fill="#e3661f" />
<rect x="808" y="413.7" width="15" height="18.30000000000001" fill="#e3661f" />
<rect x="840" y="418.6" width="16" height="13.399999999999977" fill="#e3661f" />
<rect x="872" y="357.8" width="16" height="74.19999999999999" fill="#e3661f" />
<rect x="903" y="424.2" width="16" height="7.800000000000011" fill="#e3661f" />
<line x1="767.7" y1="432.3" x2="1150" y2="432.3" stroke="#ccd6eb" stroke-width="1" />
<line x1="767.7" y1="432.3" x2="767.7" y2="437" stroke="#ccd6eb" stroke-width="1" />
<line x1="799.5583333333334" y1="432.3" x2="799.5583333333334" y2="437" stroke="#ccd6eb" stroke-width="1" />
<line x1="831.4166666666667" y1="432.3" x2="831.4166666666667" y2="437" stroke="#ccd6eb" stroke-width="1" />
<line x1="863.2750000000001" y1="432.3" x2="863.2750000000001" y2="437" stroke="#ccd6eb" stroke-width="1" />
<line x1="895.1333333333333" y1="432.3" x2="895.1333333333333" y2="437" stroke="#ccd6eb" stroke-width="1" />
<line x1="926.9916666666667" y1="432.3" x2="926.9916666666667" y2="437" stroke="#ccd6eb" stroke-width="1" />
<line x1="958.85" y1="432.3" x2="958.85" y2="437" stroke="#ccd6eb" stroke-width="1" />
<line x1="990.7083333333334" y1="432.3" x2="990.7083333333334" y2="437" stroke="#ccd6eb" stroke-width="1" />
<line x1="1022.5666666666667" y1="432.3" x2="1022.5666666666667" y2="437" stroke="#ccd6eb" stroke-width="1" />
<line x1="1054.425" y1="432.3" x2="1054.425" y2="437" stroke="#ccd6eb" stroke-width="1" />
<line x1="1086.2833333333333" y1="432.3" x2="1086.2833333333333" y2="437" stroke="#ccd6eb" stroke-width="1" />
<line x1="1118.1416666666667" y1="432.3" x2="1118.1416666666667" y2="437" stroke="#ccd6eb" stroke-width="1" />
<line x1="1150.0" y1="432.3" x2="1150.0" y2="437" stroke="#ccd6eb" stroke-width="1" />
<text transform="translate(786.1291666666667,441.5) rotate(-50)" font-size="7.6" fill="#5e5e5e" text-anchor="end" font-family="Liberation Sans">2018/01</text>
<text transform="translate(817.9875000000001,441.5) rotate(-50)" font-size="7.6" fill="#5e5e5e" text-anchor="end" font-family="Liberation Sans">2018/02</text>
<text transform="translate(849.8458333333334,441.5) rotate(-50)" font-size="7.6" fill="#5e5e5e" text-anchor="end" font-family="Liberation Sans">2018/03</text>
<text transform="translate(881.7041666666667,441.5) rotate(-50)" font-size="7.6" fill="#5e5e5e" text-anchor="end" font-family="Liberation Sans">2018/04</text>
<text transform="translate(913.5625,441.5) rotate(-50)" font-size="7.6" fill="#5e5e5e" text-anchor="end" font-family="Liberation Sans">2018/05</text>
<text transform="translate(945.4208333333333,441.5) rotate(-50)" font-size="7.6" fill="#5e5e5e" text-anchor="end" font-family="Liberation Sans">2018/06</text>
<text transform="translate(977.2791666666667,441.5) rotate(-50)" font-size="7.6" fill="#5e5e5e" text-anchor="end" font-family="Liberation Sans">2018/07</text>
<text transform="translate(1009.1375,441.5) rotate(-50)" font-size="7.6" fill="#5e5e5e" text-anchor="end" font-family="Liberation Sans">2018/08</text>
<text transform="translate(1040.9958333333334,441.5) rotate(-50)" font-size="7.6" fill="#5e5e5e" text-anchor="end" font-family="Liberation Sans">2018/09</text>
<text transform="translate(1072.8541666666667,441.5) rotate(-50)" font-size="7.6" fill="#5e5e5e" text-anchor="end" font-family="Liberation Sans">2018/10</text>
<text transform="translate(1104.7125,441.5) rotate(-50)" font-size="7.6" fill="#5e5e5e" text-anchor="end" font-family="Liberation Sans">2018/11</text>
<text transform="translate(1136.5708333333332,441.5) rotate(-50)" font-size="7.6" fill="#5e5e5e" text-anchor="end" font-family="Liberation Sans">2018/12</text>
<path d="M783.7,417.6 L815.5,398.7 L847.4,384.3 L879.3,309.2 L911.3,301.1" fill="none" stroke="#263f92" stroke-width="1.6"/>
<circle cx="783.7" cy="417.6" r="2.4" fill="#263f92"/>
<circle cx="815.5" cy="398.7" r="2.4" fill="#263f92"/>
<circle cx="847.4" cy="384.3" r="2.4" fill="#263f92"/>
<circle cx="879.3" cy="309.2" r="2.4" fill="#263f92"/>
<circle cx="911.3" cy="301.1" r="2.4" fill="#263f92"/>
<rect x="911" y="472.2" width="6.7" height="5.2" fill="#e3661f" />
<text x="920.5" y="477.3" font-size="7.35" fill="#222" font-weight="bold" text-anchor="start" font-family="Liberation Sans" textLength="23.5" lengthAdjust="spacingAndGlyphs" opacity="0.9">ЖЯЭШ</text>
<line x1="952" y1="474.7" x2="962" y2="474.7" stroke="#263f92" stroke-width="1.5" />
<path d="M957 472.3 L959.4 474.7 L957 477.1 L954.6 474.7 Z" fill="#263f92"/>
<text x="964" y="477.3" font-size="7.35" fill="#222" font-weight="bold" text-anchor="start" font-family="Liberation Sans" textLength="41" lengthAdjust="spacingAndGlyphs" opacity="0.9">ЭШФБЫЩД</text>
<rect x="1192" y="275.2" width="457" height="220" fill="#ffffff" stroke="#666666" stroke-width="1" />
<rect x="1192" y="275.2" width="457" height="12.4" fill="#666666" />
<text x="1196" y="284.0" font-size="7.88" fill="#ffffff" font-weight="normal" text-anchor="start" font-family="Liberation Sans" textLength="29" lengthAdjust="spacingAndGlyphs" opacity="0.9">ДЮЖЯ</text>
<text x="1618" y="284.8" font-size="7.88" fill="#ffffff" font-weight="normal" text-anchor="start" font-family="Liberation Sans" textLength="29" lengthAdjust="spacingAndGlyphs" opacity="0.85">ФБЫЩ</text>
<line x1="1231.5" y1="293.8" x2="1612" y2="293.8" stroke="#e6e6e6" stroke-width="1" />
<line x1="1231.5" y1="328.7" x2="1612" y2="328.7" stroke="#e6e6e6" stroke-width="1" />
<line x1="1231.5" y1="363.4" x2="1612" y2="363.4" stroke="#e6e6e6" stroke-width="1" />
<line x1="1231.5" y1="397.6" x2="1612" y2="397.6" stroke="#e6e6e6" stroke-width="1" />
<text x="1223" y="296.0" font-size="6" fill="#666" font-weight="normal" text-anchor="end" font-family="Liberation Sans" >20</text>
<text x="1619" y="296.0" font-size="6" fill="#666" font-weight="normal" text-anchor="start" font-family="Liberation Sans" >40</text>
<text x="1223" y="330.9" font-size="6" fill="#666" font-weight="normal" text-anchor="end" font-family="Liberation Sans" >15</text>
<text x="1619" y="330.9" font-size="6" fill="#666" font-weight="normal" text-anchor="start" font-family="Liberation Sans" >30</text>
<text x="1223" y="365.59999999999997" font-size="6" fill="#666" font-weight="normal" text-anchor="end" font-family="Liberation Sans" >10</text>
<text x="1619" y="365.59999999999997" font-size="6" fill="#666" font-weight="normal" text-anchor="start" font-family="Liberation Sans" >20</text>
<text x="1223" y="399.8" font-size="6" fill="#666" font-weight="normal" text-anchor="end" font-family="Liberation Sans" >5</text>
<text x="1619" y="399.8" font-size="6" fill="#666" font-weight="normal" text-anchor="start" font-family="Liberation Sans" >10</text>
<text x="1223" y="434.2" font-size="6" fill="#666" font-weight="normal" text-anchor="end" font-family="Liberation Sans" >0</text>
<text x="1619" y="434.2" font-size="6" fill="#666" font-weight="normal" text-anchor="start" font-family="Liberation Sans" >0</text>
<rect x="1631" y="295.5" width="8.5" height="1.3" fill="#666" />
<rect x="1631" y="297.9" width="8.5" height="1.3" fill="#666" />
<rect x="1631" y="300.3" width="8.5" height="1.3" fill="#666" />
<g transform="translate(1210,363) rotate(-90)">
<text x="0" y="2" font-size="6.5" fill="#666" font-weight="normal" text-anchor="middle" font-family="Liberation Sans" >km</text>
</g>
<g transform="translate(1637,363) rotate(90)">
<text x="0" y="2" font-size="6.5" fill="#666" font-weight="normal" text-anchor="middle" font-family="Liberation Sans" >km</text>
</g>
<rect x="1238.5" y="429.8" width="15.299999999999955" height="2.1999999999999886" fill="#e3661f" />
<rect x="1271" y="425.6" width="15" height="6.399999999999977" fill="#e3661f" />
<rect x="1334.8" y="306.5" width="15.200000000000045" height="125.5" fill="#e3661f" />
<rect x="1366.4" y="425.6" width="16.299999999999955" height="6.399999999999977" fill="#e3661f" />
<line x1="1231.5" y1="432.3" x2="1612" y2="432.3" stroke="#ccd6eb" stroke-width="1" />
<line x1="1231.5" y1="432.3" x2="1231.5" y2="437" stroke="#ccd6eb" stroke-width="1" />
<line x1="1263.2083333333333" y1="432.3" x2="1263.2083333333333" y2="437" stroke="#ccd6eb" stroke-width="1" />
<line x1="1294.9166666666667" y1="432.3" x2="1294.9166666666667" y2="437" stroke="#ccd6eb" stroke-width="1" />
<line x1="1326.625" y1="432.3" x2="1326.625" y2="437" stroke="#ccd6eb" stroke-width="1" />
<line x1="1358.3333333333333" y1="432.3" x2="1358.3333333333333" y2="437" stroke="#ccd6eb" stroke-width="1" />
<line x1="1390.0416666666667" y1="432.3" x2="1390.0416666666667" y2="437" stroke="#ccd6eb" stroke-width="1" />
<line x1="1421.75" y1="432.3" x2="1421.75" y2="437" stroke="#ccd6eb" stroke-width="1" />
<line x1="1453.4583333333333" y1="432.3" x2="1453.4583333333333" y2="437" stroke="#ccd6eb" stroke-width="1" />
<line x1="1485.1666666666667" y1="432.3" x2="1485.1666666666667" y2="437" stroke="#ccd6eb" stroke-width="1" />
<line x1="1516.875" y1="432.3" x2="1516.875" y2="437" stroke="#ccd6eb" stroke-width="1" />
<line x1="1548.5833333333333" y1="432.3" x2="1548.5833333333333" y2="437" stroke="#ccd6eb" stroke-width="1" />
<line x1="1580.2916666666665" y1="432.3" x2="1580.2916666666665" y2="437" stroke="#ccd6eb" stroke-width="1" />
<line x1="1612.0" y1="432.3" x2="1612.0" y2="437" stroke="#ccd6eb" stroke-width="1" />
<text transform="translate(1249.8541666666667,441.5) rotate(-50)" font-size="7.6" fill="#5e5e5e" text-anchor="end" font-family="Liberation Sans">2018/01</text>
<text transform="translate(1281.5625,441.5) rotate(-50)" font-size="7.6" fill="#5e5e5e" text-anchor="end" font-family="Liberation Sans">2018/02</text>
<text transform="translate(1313.2708333333333,441.5) rotate(-50)" font-size="7.6" fill="#5e5e5e" text-anchor="end" font-family="Liberation Sans">2018/03</text>
<text transform="translate(1344.9791666666667,441.5) rotate(-50)" font-size="7.6" fill="#5e5e5e" text-anchor="end" font-family="Liberation Sans">2018/04</text>
<text transform="translate(1376.6875,441.5) rotate(-50)" font-size="7.6" fill="#5e5e5e" text-anchor="end" font-family="Liberation Sans">2018/05</text>
<text transform="translate(1408.3958333333333,441.5) rotate(-50)" font-size="7.6" fill="#5e5e5e" text-anchor="end" font-family="Liberation Sans">2018/06</text>
<text transform="translate(1440.1041666666667,441.5) rotate(-50)" font-size="7.6" fill="#5e5e5e" text-anchor="end" font-family="Liberation Sans">2018/07</text>
<text transform="translate(1471.8125,441.5) rotate(-50)" font-size="7.6" fill="#5e5e5e" text-anchor="end" font-family="Liberation Sans">2018/08</text>
<text transform="translate(1503.5208333333333,441.5) rotate(-50)" font-size="7.6" fill="#5e5e5e" text-anchor="end" font-family="Liberation Sans">2018/09</text>
<text transform="translate(1535.2291666666665,441.5) rotate(-50)" font-size="7.6" fill="#5e5e5e" text-anchor="end" font-family="Liberation Sans">2018/10</text>
<text transform="translate(1566.9375,441.5) rotate(-50)" font-size="7.6" fill="#5e5e5e" text-anchor="end" font-family="Liberation Sans">2018/11</text>
<text transform="translate(1598.6458333333333,441.5) rotate(-50)" font-size="7.6" fill="#5e5e5e" text-anchor="end" font-family="Liberation Sans">2018/12</text>
<path d="M1246.9,430.7 L1278,427 L1310.6,427 L1342.2,364.2 L1373.8,361" fill="none" stroke="#263f92" stroke-width="1.6"/>
<circle cx="1246.9" cy="430.7" r="2.4" fill="#263f92"/>
<circle cx="1278" cy="427" r="2.4" fill="#263f92"/>
<circle cx="1310.6" cy="427" r="2.4" fill="#263f92"/>
<circle cx="1342.2" cy="364.2" r="2.4" fill="#263f92"/>
<circle cx="1373.8" cy="361" r="2.4" fill="#263f92"/>
<rect x="1373" y="472.2" width="6.7" height="5.2" fill="#e3661f" />
<text x="1382.5" y="477.3" font-size="7.35" fill="#222" font-weight="bold" text-anchor="start" font-family="Liberation Sans" textLength="23.5" lengthAdjust="spacingAndGlyphs" opacity="0.9">ЫЩДЮ</text>
<line x1="1414" y1="474.7" x2="1424" y2="474.7" stroke="#263f92" stroke-width="1.5" />
<path d="M1419 472.3 L1421.4 474.7 L1419 477.1 L1416.6 474.7 Z" fill="#263f92"/>
<text x="1426" y="477.3" font-size="7.35" fill="#222" font-weight="bold" text-anchor="start" font-family="Liberation Sans" textLength="41" lengthAdjust="spacingAndGlyphs" opacity="0.9">ДЮЖЯЭШФ</text>
</svg></body></html>
